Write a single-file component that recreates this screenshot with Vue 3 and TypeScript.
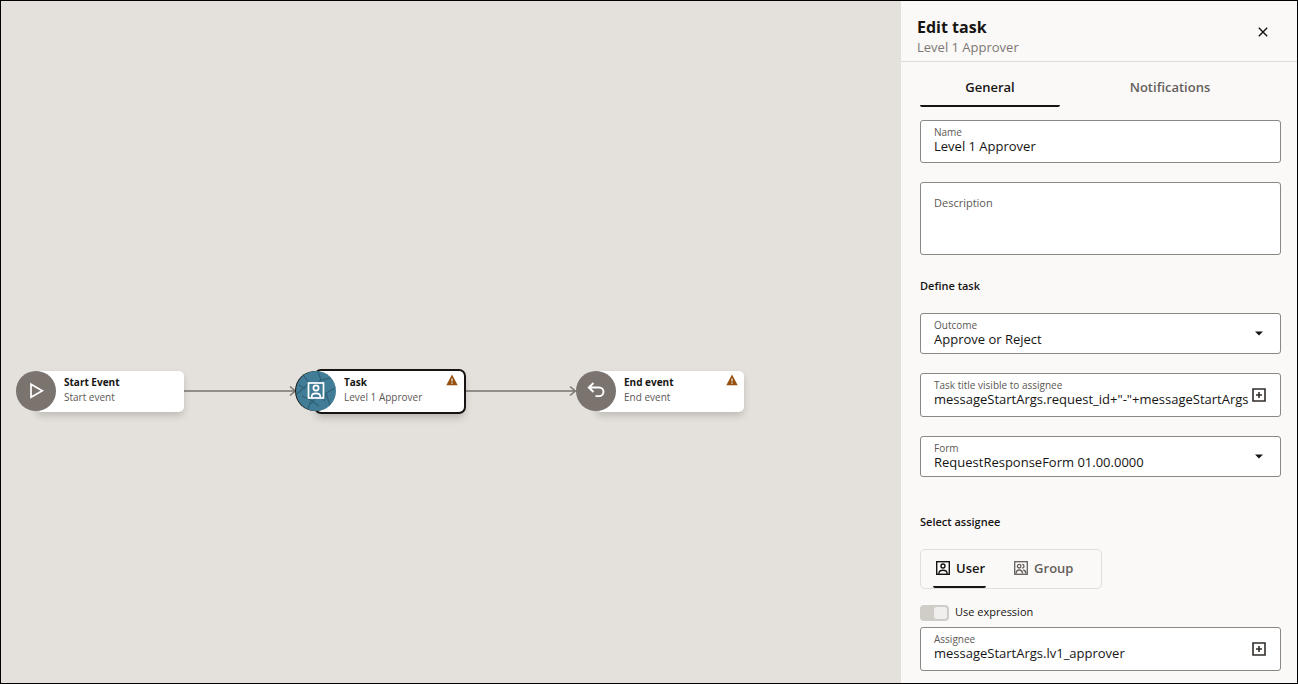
<script setup lang="ts">
import { ref } from 'vue'

interface FlowNode {
  id: string
  kind: 'start' | 'task' | 'end'
  title: string
  subtitle: string
  x: number
  warning: boolean
}

const nodes: FlowNode[] = [
  { id: 'start', kind: 'start', title: 'Start Event', subtitle: 'Start event', x: 15, warning: false },
  { id: 'task', kind: 'task', title: 'Task', subtitle: 'Level 1 Approver', x: 295, warning: true },
  { id: 'end', kind: 'end', title: 'End event', subtitle: 'End event', x: 575, warning: true },
]
const links = [183, 463]

const tab = ref('General')
const assigneeType = ref('User')
const name = ref('Level 1 Approver')
const description = ref('')
const outcome = ref('Approve or Reject')
const taskTitle = ref('messageStartArgs.request_id+"-"+messageStartArgs')
const form = ref('RequestResponseForm 01.00.0000')
const useExpression = ref(true)
const assignee = ref('messageStartArgs.lv1_approver')
</script>

<template>
  <div class="app">
    <main class="canvas">
      <svg
        v-for="x in links"
        :key="x"
        class="link"
        :style="{ left: x + 'px' }"
        width="113"
        height="14"
        viewBox="0 0 113 14"
      >
        <path d="M0 7H111M106 2.5L111.3 7L106 11.5" fill="none" stroke="#7a736e" stroke-width="1.5" />
      </svg>
      <article
        v-for="n in nodes"
        :key="n.id"
        class="node"
        :class="{ selected: n.kind === 'task' }"
        :style="{ left: n.x + 'px' }"
      >
        <span class="disc">
          <svg v-if="n.kind === 'start'" width="40" height="40" viewBox="0 0 40 40">
            <path d="M15 13.2V26.2L26.3 19.7Z" fill="none" stroke="#fff" stroke-width="1.7" />
          </svg>
          <svg v-else-if="n.kind === 'task'" width="40" height="40" viewBox="0 0 40 40">
            <g fill="none" stroke="#2f6175" stroke-width="1.2">
              <path d="M8 5L13 12M13 12L1 23M3 14L9 18M12 38L15 29L6 25M15 29L23 35M22 1L25 9L35 7M25 9L19 14M39 17L30 22L34 34M30 22L28 30M19 28L15 33" />
            </g>
            <g fill="none" stroke="#fff" stroke-width="1.7">
              <rect x="12.5" y="12" width="15" height="15" />
              <circle cx="20" cy="17" r="2.6" />
              <path d="M15.8 26.5V25Q16 22.3 20 22.3T24.2 25V26.5" />
            </g>
          </svg>
          <svg v-else width="40" height="40" viewBox="0 0 40 40">
            <path d="M17.5 12L12.8 16.5L17.5 21M13 16.5H23.2A4.3 4.3 0 0 1 23.2 25.1H19.5" fill="none" stroke="#fff" stroke-width="1.9" />
          </svg>
        </span>
        <div class="card">
          <div class="text">
            <strong>{{ n.title }}</strong>
            <span>{{ n.subtitle }}</span>
          </div>
          <svg v-if="n.warning" class="warn" width="12" height="12" viewBox="0 0 12 12">
            <path d="M6 .4L11.7 11.2H.3Z" fill="#95500f" />
            <path d="M6 4.4V7.6M6 8.6V9.8" stroke="#fff" stroke-width="1.1" />
          </svg>
        </div>
      </article>
    </main>

    <aside class="panel">
      <header class="head">
        <div>
          <h1>Edit task</h1>
          <p>Level 1 Approver</p>
        </div>
        <button class="close" type="button" aria-label="Close">
          <svg width="12" height="12" viewBox="0 0 12 12">
            <path d="M1.8 1.8L10.2 10.2M10.2 1.8L1.8 10.2" stroke="#161513" stroke-width="1.4" />
          </svg>
        </button>
      </header>

      <nav class="tabs">
        <button
          v-for="t in ['General', 'Notifications']"
          :key="t"
          type="button"
          :class="{ active: tab === t }"
          @click="tab = t"
        >{{ t }}</button>
      </nav>

      <form class="form" @submit.prevent>
        <div class="field">
          <div class="body">
            <label for="name">Name</label>
            <input id="name" v-model="name" type="text" />
          </div>
        </div>
        <div class="field area">
          <label for="description">Description</label>
          <textarea id="description" v-model="description"></textarea>
        </div>

        <h2>Define task</h2>

        <div class="field choice">
          <div class="body">
            <label for="outcome">Outcome</label>
            <select id="outcome" v-model="outcome">
              <option>Approve or Reject</option>
            </select>
          </div>
          <svg class="caret" width="14" height="14" viewBox="0 0 14 14"><path d="M3 4.5H11L7 8.5Z" fill="#161513" /></svg>
        </div>
        <div class="field expr">
          <div class="body">
            <label for="task-title">Task title visible to assignee</label>
            <input id="task-title" v-model="taskTitle" type="text" />
          </div>
          <button class="add" type="button" aria-label="Build task title expression">
            <svg width="14" height="14" viewBox="0 0 14 14"><path d="M1 1H13V13H1ZM7 4V10M4 7H10" fill="none" stroke="#312d2a" stroke-width="1.6" /></svg>
          </button>
        </div>
        <div class="field choice">
          <div class="body">
            <label for="form">Form</label>
            <select id="form" v-model="form">
              <option>RequestResponseForm 01.00.0000</option>
            </select>
          </div>
          <svg class="caret" width="14" height="14" viewBox="0 0 14 14"><path d="M3 4.5H11L7 8.5Z" fill="#161513" /></svg>
        </div>

        <h2 class="assign">Select assignee</h2>

        <div class="types">
          <button type="button" :class="{ active: assigneeType === 'User' }" @click="assigneeType = 'User'">
            <svg width="14" height="14" viewBox="0 0 14 14" fill="none" stroke="currentColor" stroke-width="1.4">
              <rect x=".7" y=".7" width="12.6" height="12.6" />
              <circle cx="7" cy="5" r="2" />
              <path d="M3 13V12Q3.2 9.2 7 9.2T11 12V13" />
            </svg>
            User
          </button>
          <button type="button" :class="{ active: assigneeType === 'Group' }" @click="assigneeType = 'Group'">
            <svg width="14" height="14" viewBox="0 0 14 14" fill="none" stroke="currentColor" stroke-width="1.3">
              <rect x=".7" y=".7" width="12.6" height="12.6" />
              <circle cx="5.2" cy="5.2" r="1.8" />
              <path d="M2 12.6Q2.2 9 5.2 9T8.6 12.6M8.2 3.4A1.8 1.8 0 1 1 8.2 7M9.2 9Q11.8 9.4 12 12.6" />
            </svg>
            Group
          </button>
        </div>

        <label class="switch">
          <input v-model="useExpression" type="checkbox" role="switch" />
          <span>Use expression</span>
        </label>

        <div class="field expr">
          <div class="body">
            <label for="assignee">Assignee</label>
            <input id="assignee" v-model="assignee" type="text" />
          </div>
          <button class="add" type="button" aria-label="Build assignee expression">
            <svg width="14" height="14" viewBox="0 0 14 14"><path d="M1 1H13V13H1ZM7 4V10M4 7H10" fill="none" stroke="#312d2a" stroke-width="1.6" /></svg>
          </button>
        </div>
      </form>
    </aside>
  </div>
</template>

<style>
body {
  margin: 0;
}
</style>

<style scoped>
.app {
  box-sizing: border-box;
  display: flex;
  height: 100vh;
  border: 1px solid #000;
  background: #e4e1dc;
  color: #161513;
  font-family: "Open Sans", "Noto Sans", sans-serif;
  font-size: 13px;
}
.app *,
.app *::before {
  box-sizing: border-box;
}
svg {
  display: block;
  flex: none;
}
button {
  padding: 0;
  border: 0;
  background: none;
  color: inherit;
  font: inherit;
  cursor: pointer;
}

/* Flow canvas */
.canvas {
  position: relative;
  flex: 1;
  min-width: 0;
  overflow: hidden;
}
.link {
  position: absolute;
  top: 383px;
}
.node {
  position: absolute;
  top: 370px;
  width: 168px;
}
.disc {
  position: absolute;
  top: 0;
  left: 0;
  z-index: 1;
  width: 40px;
  height: 40px;
  border-radius: 50%;
  background: #7a736e;
  overflow: hidden;
}
.card {
  display: flex;
  height: 41px;
  margin-left: 20px;
  padding: 4px 6px 0 28px;
  border-radius: 5px;
  background: #fff;
  box-shadow: 0 4px 7px rgb(0 0 0 / 16%);
}
.warn {
  margin-top: -1px;
}
.text {
  display: flex;
  flex: 1;
  flex-direction: column;
  font-size: 10px;
  line-height: 15px;
  white-space: nowrap;
}
.text span {
  color: #5c5855;
}
.selected .card {
  box-shadow: 0 0 0 2px #161513, 0 5px 8px rgb(0 0 0 / 22%);
}
.selected .disc {
  background: #417d97;
  box-shadow: -1px 0 0 #161513;
}

/* Properties panel */
.panel {
  width: 396px;
  flex: none;
  background: #faf9f8;
  overflow: hidden;
}
.head {
  display: flex;
  align-items: center;
  justify-content: space-between;
  height: 61px;
  padding: 12px 28px 0 16px;
  border-bottom: 1px solid #dfdcd9;
}
h1 {
  margin: 0;
  font-size: 16px;
  font-weight: 700;
  line-height: 22px;
}
.head p {
  margin: 0 0 2px;
  color: #7c7774;
  line-height: 18px;
}
.close {
  margin-bottom: 10px;
}
.tabs {
  display: grid;
  grid-template-columns: 140px 140px;
  gap: 40px;
  padding-left: 19px;
}
.tabs button {
  height: 45px;
  padding-top: 7px;
  border-bottom: 2px solid transparent;
  border-radius: 2px;
  color: #65605c;
  font-weight: 600;
}
.tabs .active {
  border-color: #161513;
  color: #161513;
}
.form {
  padding: 13px 16px 0 19px;
}
.field {
  display: flex;
  align-items: center;
  min-height: 43px;
  margin-bottom: 19px;
  padding: 0 14px 0 13px;
  border: 1px solid #8b8783;
  border-radius: 3px;
  background: #fff;
}
.body {
  display: flex;
  flex: 1;
  flex-direction: column;
  align-self: flex-start;
  min-width: 0;
  padding-top: 5px;
}
.field label {
  color: #5c5855;
  font-size: 10px;
  line-height: 12px;
}
input[type="text"],
select,
textarea {
  width: 100%;
  height: 16px;
  margin: 0;
  padding: 0;
  border: 0;
  outline: 0;
  background: none;
  color: #161513;
  font: inherit;
  line-height: 16px;
}
select {
  appearance: none;
}
.choice {
  min-height: 41px;
}
.expr {
  min-height: 44px;
}
.area {
  display: block;
  height: 73px;
  padding-top: 12px;
}
.field.area label {
  display: block;
  font-size: 11px;
  line-height: 16px;
}
textarea {
  height: 36px;
  resize: none;
}
.add,
.caret {
  margin-left: 3px;
}
h2 {
  margin: 23px 0 19px;
  font-size: 11px;
  font-weight: 600;
  line-height: 16px;
}
h2.assign {
  margin-top: 37px;
}
.types {
  display: flex;
  width: 182px;
  height: 40px;
  gap: 25px;
  padding-left: 12px;
  border: 1px solid #e0ddda;
  border-radius: 5px;
}
.types button {
  display: flex;
  align-items: center;
  gap: 6px;
  padding: 0 1px 0 3px;
  border-bottom: 2px solid transparent;
  border-radius: 2px;
  color: #65605c;
  font-weight: 600;
}
.types .active {
  border-color: #161513;
  color: #161513;
}
.switch {
  display: flex;
  align-items: center;
  gap: 6px;
  height: 16px;
  margin: 16px 0 6px;
  font-size: 11px;
  line-height: 14px;
}
.switch span {
  padding-bottom: 2px;
}
.switch input {
  display: flex;
  align-items: center;
  appearance: none;
  width: 29px;
  height: 16px;
  margin: 0;
  padding: 2px;
  border-radius: 4px;
  background: #d0ccc8;
}
.switch input::before {
  width: 13px;
  height: 12px;
  border-radius: 3px;
  background: #f1efed;
  content: "";
}
.switch input:checked {
  justify-content: flex-end;
}
</style>
